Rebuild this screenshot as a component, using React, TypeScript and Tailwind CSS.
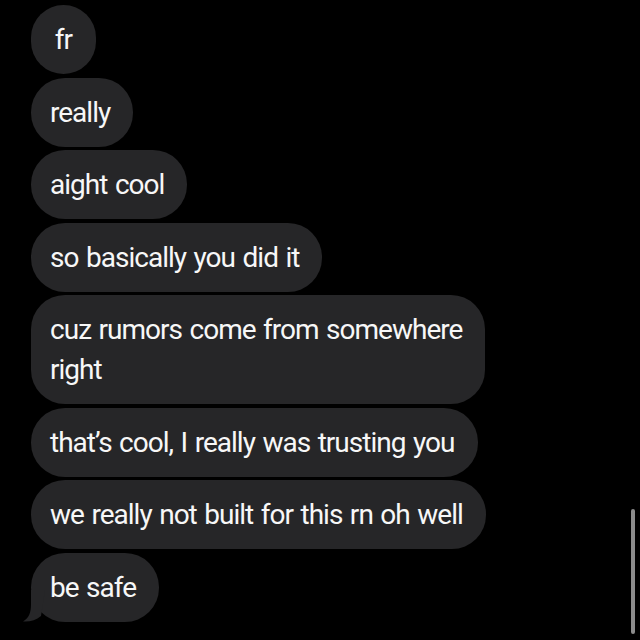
const messages = [
  { lines: ["fr"], short: true },
  { lines: ["really"] },
  { lines: ["aight cool"] },
  { lines: ["so basically you did it"] },
  { lines: ["cuz rumors come from somewhere", "right"] },
  { lines: ["that\u2019s cool, I really was trusting you"] },
  { lines: ["we really not built for this rn oh well"] },
  { lines: ["be safe"], tail: true },
];

function Tail() {
  return (
    <svg
      className="absolute bottom-0 left-[-8px]"
      width="26"
      height="32"
      viewBox="0 0 26 32"
    >
      <path
        d="M8 0 L8 14 C8 23 6 28 0 31.5 C7 32 13 30 18 26 L22 0 Z"
        fill="#262628"
      />
    </svg>
  );
}

export default function App() {
  return (
    <div className="relative h-[640px] w-[640px] overflow-hidden bg-black font-['Roboto',Arial,sans-serif]">
      <div className="flex flex-col items-start gap-[3.5px] pl-[31px] pt-[5px]">
        {messages.map((m, i) => (
          <div
            key={i}
            className={
              "relative min-w-[65px] whitespace-nowrap rounded-[34px] bg-[#262628] pb-[14px] pt-[15px] text-[28px] leading-[40px] tracking-[-0.035em] [word-spacing:1.5px] text-[#f7f7f7] " +
              (m.short ? "px-[10px] text-center" : "pl-[19px] pr-[23px]")
            }
          >
            {m.tail && <Tail />}
            {m.lines.map((l, j) => (
              <div key={j} className="relative">
                {l}
              </div>
            ))}
          </div>
        ))}
      </div>
      {/* scroll indicator */}
      <div className="absolute right-[5px] top-[509px] h-[125px] w-[4px] rounded-full bg-[#8c8c8c]" />
    </div>
  );
}
